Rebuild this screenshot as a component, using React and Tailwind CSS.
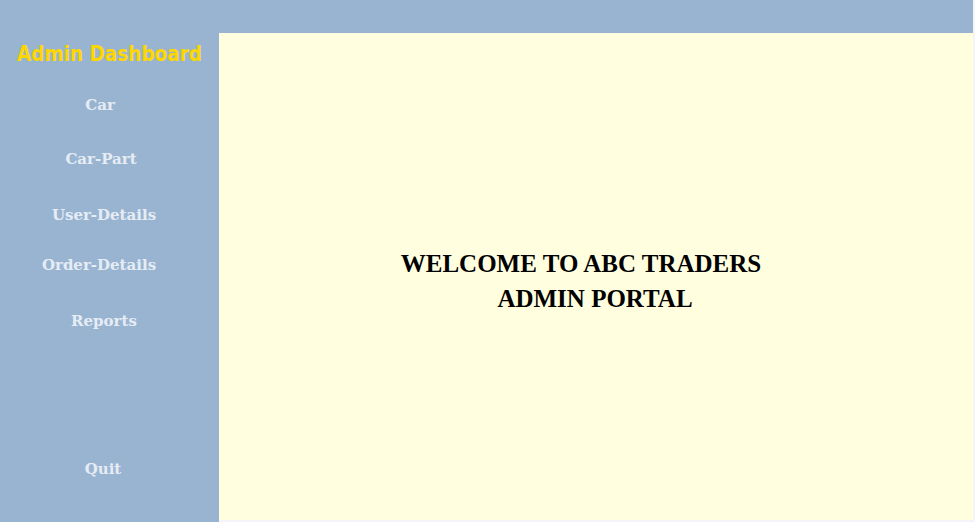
export default function App() {
  const items = [
    { label: "Car", cls: "mt-[28px] pr-[19px]" },
    { label: "Car-Part", cls: "mt-[34px] pr-[17px]" },
    { label: "User-Details", cls: "mt-[36px] pr-[11px]" },
    { label: "Order-Details", cls: "mt-[30px] pr-[21px]" },
    { label: "Reports", cls: "mt-[36px] pr-[11px]" },
  ];

  return (
    <div className="flex h-[522px] w-[975px] overflow-hidden bg-[#99b4d1]">
      <aside className="flex w-[219px] shrink-0 flex-col items-center pt-[41px]">
        <h1 className="font-['DejaVu_Sans_Condensed','DejaVu_Sans',sans-serif] text-[20.5px] leading-[26px] font-bold text-[#ffd700]">
          Admin Dashboard
        </h1>
        {items.map((it) => (
          <button
            key={it.label}
            className={`${it.cls} font-['DejaVu_Serif',serif] text-[15px] leading-[20px] font-bold text-[#e6ecf4]`}
          >
            {it.label}
          </button>
        ))}
        <button className="mt-[128px] pr-[13px] font-['DejaVu_Serif',serif] text-[15px] leading-[20px] font-bold text-[#e6ecf4]">
          Quit
        </button>
      </aside>

      <div className="flex flex-1 bg-[#f3f5f8]">
        <div className="mr-[2px] mb-[2px] flex flex-1 flex-col bg-[#99b4d1] pt-[33px]">
          <main className="flex flex-1 flex-col items-center justify-center bg-[#ffffe0] pt-[9px] font-['Liberation_Serif',serif] text-[25px] leading-[35px] font-bold text-black">
            <p className="pr-[30px]">WELCOME TO ABC TRADERS</p>
            <p className="pr-[2px]">ADMIN PORTAL</p>
          </main>
        </div>
      </div>
    </div>
  );
}
